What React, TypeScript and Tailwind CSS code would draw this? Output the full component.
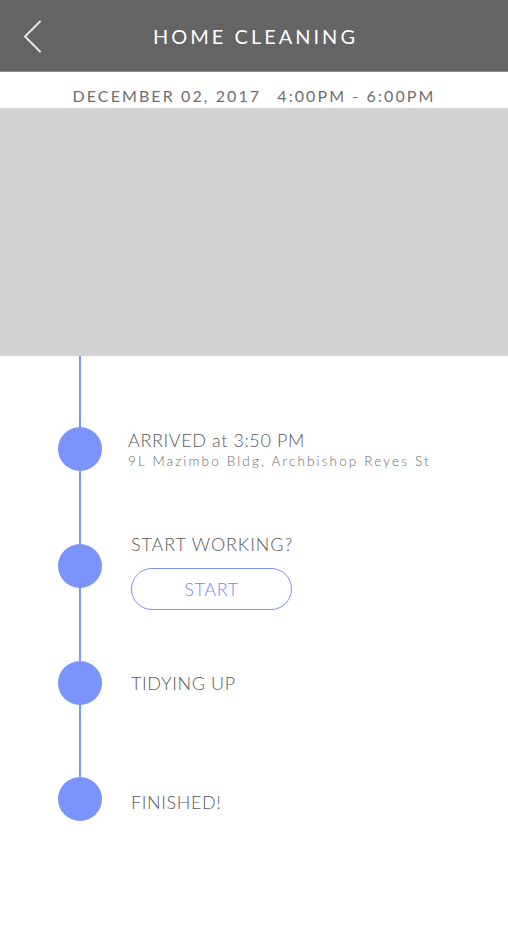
import React from 'react';

const font = { fontFamily: 'Lato, "Noto Sans", sans-serif' };

const Dot: React.FC<{ last?: boolean }> = ({ last }) => (
  <div className="w-[44px] ml-[58px] flex flex-col items-center shrink-0">
    <div className="w-[44px] h-[44px] rounded-full bg-[#7b93fd]" />
    {!last && <div className="w-[2px] flex-1 bg-[#7b93fd]" />}
  </div>
);

export default function App() {
  return (
    <div className="w-[508px] h-[937px] bg-white overflow-hidden font-light" style={font}>
      <header className="h-[72px] bg-[#646464] border-b border-[#8c8c8c] flex items-center relative">
        <svg className="absolute left-[22px] top-[20px]" width="22" height="33" viewBox="0 0 22 33" fill="none">
          <path d="M18 1.5 L3 16.5 L18 31.5" stroke="#e6e6e6" strokeWidth="2" strokeLinecap="round" strokeLinejoin="round" />
        </svg>
        <h1 className="w-full text-center text-white text-[20px] font-normal tracking-[3px] pl-[3px]">HOME CLEANING</h1>
      </header>

      <div className="h-[36px] flex items-center justify-center gap-[16px] pt-[12px] text-[#6e6e6e] text-[16px] font-normal tracking-[2.1px]">
        <span>DECEMBER 02, 2017</span>
        <span>4:00PM - 6:00PM</span>
      </div>

      <div className="h-[248px] bg-[#d3d3d3]" />

      <section className="flex flex-col">
        <div className="h-[71px] w-[2px] ml-[79px] bg-[#7b93fd]" />

        <div className="flex h-[117px]">
          <Dot />
          <div className="ml-[26px] mt-[2px]">
            <p className="text-[18px] text-[#595959] leading-[22px] tracking-[0.6px]">ARRIVED at 3:50 PM</p>
            <p className="text-[13.5px] text-[#6a6a6a] tracking-[2.15px] leading-[16px] mt-[2px]">9L Mazimbo Bldg, Archbishop Reyes St</p>
          </div>
        </div>

        <div className="flex h-[117px]">
          <Dot />
          <div className="ml-[29px] -mt-[11px]">
            <p className="text-[18px] text-[#595959] leading-[22px] tracking-[0.9px]">START WORKING?</p>
            <button className="mt-[13px] w-[161px] h-[42px] rounded-full border-[1.5px] border-[#7b93fd] text-[#6f89fb] text-[18px] tracking-[0.6px]">
              START
            </button>
          </div>
        </div>

        <div className="flex h-[116px]">
          <Dot />
          <div className="ml-[29px] mt-[11px]">
            <p className="text-[18px] text-[#595959] leading-[22px] tracking-[0.6px]">TIDYING UP</p>
          </div>
        </div>

        <div className="flex h-[60px]">
          <Dot last />
          <div className="ml-[29px] mt-[14px]">
            <p className="text-[18px] text-[#595959] leading-[22px] tracking-[0.6px]">FINISHED!</p>
          </div>
        </div>
      </section>
    </div>
  );
}
